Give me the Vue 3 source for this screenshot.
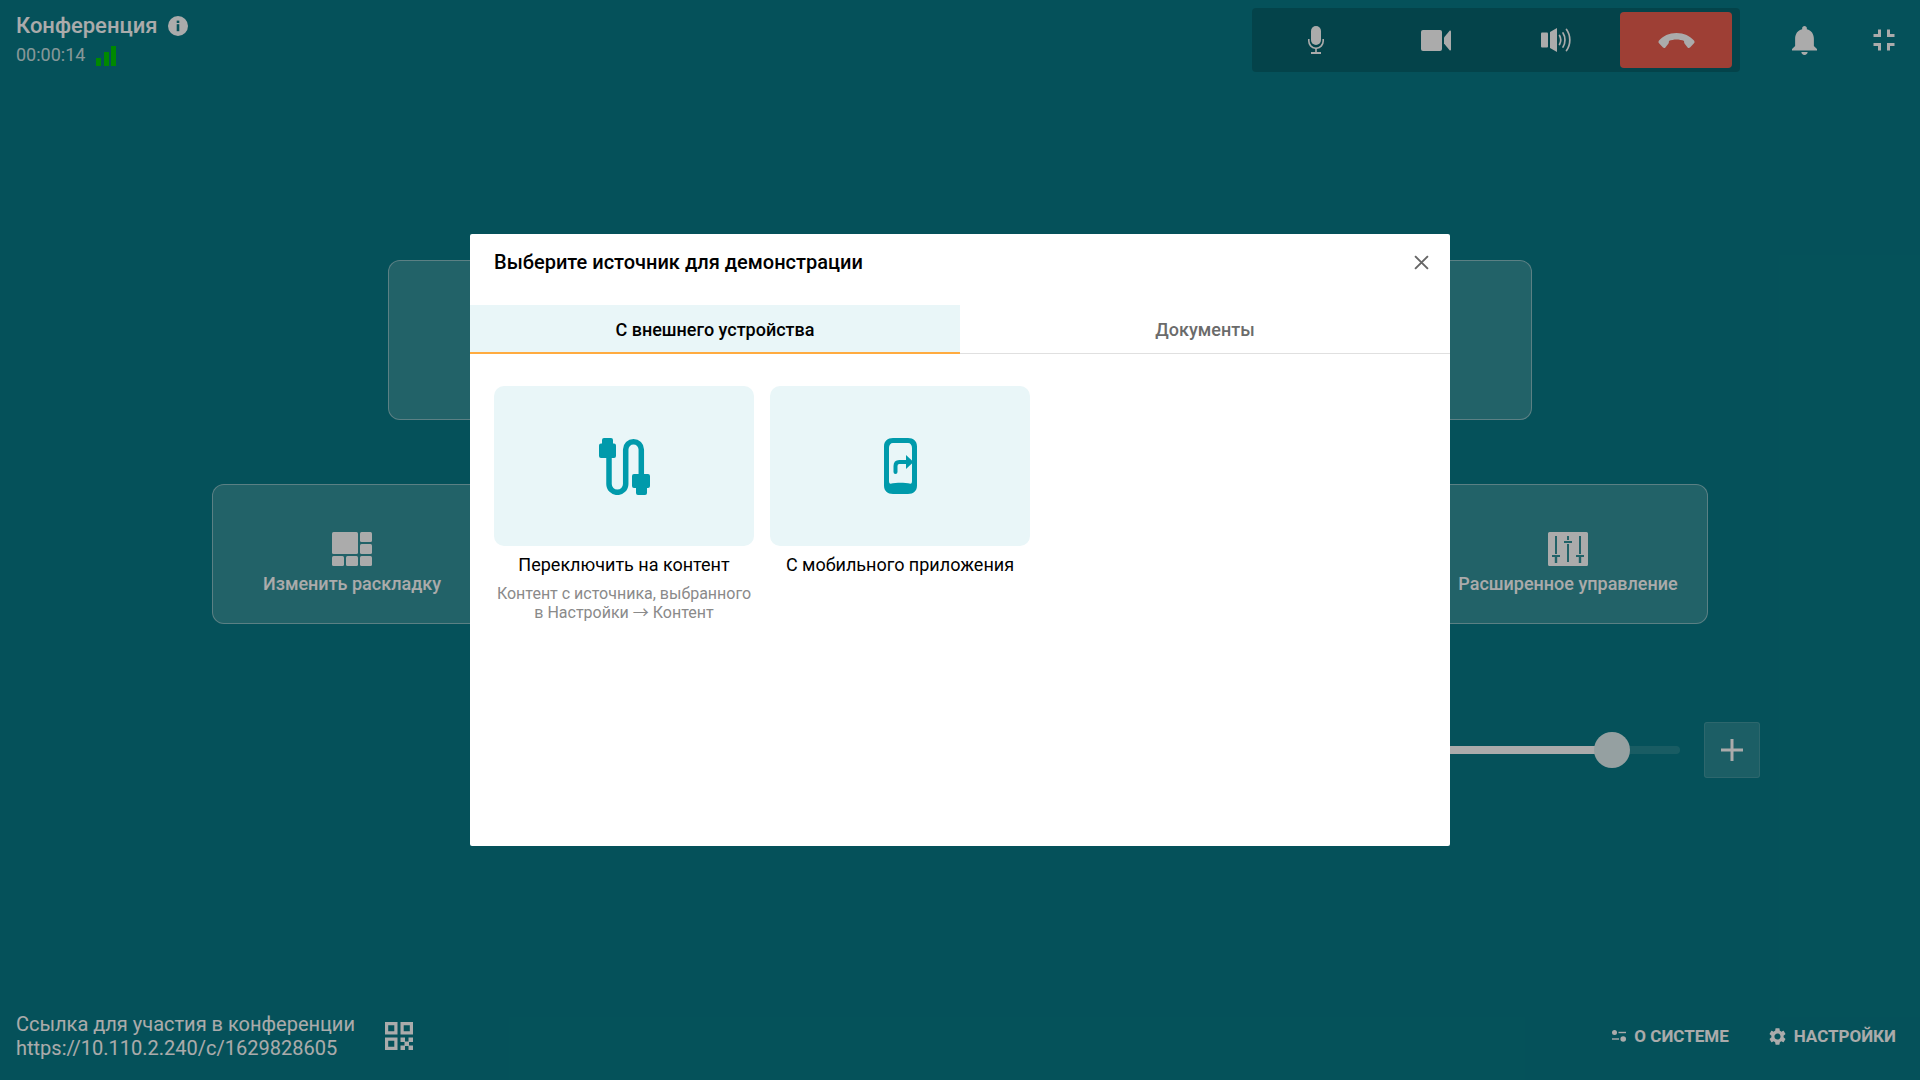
<script setup>
const topTiles = [0, 1, 2]
const midTiles = [0, 1, 2, 3, 4]
</script>

<template>
  <div class="page">
    <header class="topbar">
      <div class="conf">
        <div class="conf-title">
          <span>Конференция</span>
          <svg class="info" viewBox="0 0 20 20"><circle cx="10" cy="10" r="10" fill="#fff"/><rect x="8.7" y="8.2" width="2.6" height="7" fill="#087985"/><rect x="8.7" y="4.6" width="2.6" height="2.4" fill="#087985"/></svg>
        </div>
        <div class="conf-sub">
          <span>00:00:14</span>
          <div class="signal"><i class="b1"></i><i class="b2"></i><i class="b3"></i></div>
        </div>
      </div>
      <div class="controls">
        <div class="panel">
          <button class="pbtn">
            <svg width="16" height="28" viewBox="0 0 16 28" fill="#fff"><rect x="3" y="0" width="10" height="19" rx="5"/><path d="M0 13h1.600v2a6.400 6.400 0 0 0 12.800 0v-2H16v2a8 8 0 0 1-7.200 8v3H13v2H3v-2h4.200v-3A8 8 0 0 1 0 15z"/></svg>
          </button>
          <button class="pbtn">
            <svg width="30" height="21" viewBox="0 0 30 21" fill="#fff"><rect x="0" y="0" width="21" height="21" rx="2"/><path d="M23 7.500 28.600.8c.5-.5 1.400-.2 1.400.5v18.400c0 .7-.9 1-1.400.5L23 13.500z"/></svg>
          </button>
          <button class="pbtn">
            <svg width="30" height="24" viewBox="0 0 30 24" fill="none"><rect x="0" y="4.500" width="7" height="15" rx="1" fill="#fff"/><path d="M9 4 16 0v24l-7-4z" fill="#fff"/><path d="M18.500 7.500c1.400 2.500 1.400 6.500 0 9M22 5c2.600 4 2.600 10 0 14M25.500 1.500c4.400 6 4.400 15 0 21" stroke="#fff" stroke-width="1.700" stroke-linecap="round"/></svg>
          </button>
          <button class="pbtn hang">
            <svg width="37" height="15" viewBox="0 0 37 15" fill="#fff"><path d="M18.500 0C11 0 5 3 1 7.500c-.7 1-.7 2 0 2.800L5 14.500c.7.7 1.800.6 2.400-.1l3.100-3.900c.5-.7.500-1.500.4-2.500C13 7 16 6.500 18.500 6.500S24 7 26.100 8c-.1 1-.1 1.800.4 2.500l3.100 3.900c.6.700 1.700.8 2.400.1L36 10.300c.7-.8.7-1.800 0-2.800C32 3 26 0 18.500 0z"/></svg>
          </button>
        </div>
        <svg class="bell" viewBox="4 2.500 16 19.500" preserveAspectRatio="none" fill="#fff"><path d="M12 22c1.100 0 2-.9 2-2h-4c0 1.100.9 2 2 2zm6-6v-5c0-3.070-1.630-5.640-4.500-6.320V4c0-.83-.67-1.500-1.500-1.500s-1.500.67-1.500 1.500v.68C7.640 5.360 6 7.920 6 11v5l-2 2v1h16v-1l-2-2z"/></svg>
        <svg class="shrink" viewBox="0 0 24 24" fill="#fff"><path d="M5 16h3v3h2v-5H5v2zm3-8H5v2h5V5H8v3zm6 11h2v-3h3v-2h-5v5zm2-11V5h-2v5h5V8h-3z"/></svg>
      </div>
    </header>

    <main class="stage">
      <div class="row row-top">
        <div v-for="t in topTiles" :key="t" class="tile tile-top"></div>
      </div>
      <div class="row row-mid">
        <div v-for="t in midTiles" :key="t" class="tile tile-mid">
          <template v-if="t === 0">
            <svg width="40" height="34" viewBox="0 0 40 34" fill="#fff">
              <rect width="26" height="22" rx="1.500"/><rect x="28" width="12" height="10" rx="1.500"/><rect x="28" y="12" width="12" height="10" rx="1.500"/>
              <rect y="24" width="12" height="10" rx="1.500"/><rect x="14" y="24" width="12" height="10" rx="1.500"/><rect x="28" y="24" width="12" height="10" rx="1.500"/>
            </svg>
            <span>Изменить раскладку</span>
          </template>
          <template v-if="t === 4">
            <svg width="40" height="34" viewBox="0 0 40 34" fill="#fff">
              <path fill-rule="evenodd" d="M1.500 0h37A1.500 1.500 0 0 1 40 1.500v31a1.500 1.500 0 0 1-1.500 1.500h-37A1.500 1.500 0 0 1 0 32.500v-31A1.500 1.500 0 0 1 1.500 0zM7 4v18h2V4zM4 23v2h2.800v6h2.400v-6H12v-2zM19 4v4h2V4zM16 9v2h8V9zM19 12v18h2V12zM31 4v18h2V4zM28 23v2h2.800v6h2.400v-6H36v-2z"/>
            </svg>
            <span>Расширенное управление</span>
          </template>
        </div>
      </div>
      <div class="zoom">
        <div class="track"><div class="fill"></div><div class="thumb"></div></div>
        <div class="plus">
          <svg width="22" height="22" viewBox="0 0 22 22" fill="#fff"><rect x="9.500" y="0" width="3" height="22"/><rect x="0" y="9.500" width="22" height="3"/></svg>
        </div>
      </div>
    </main>

    <footer class="bottom">
      <div class="link">
        <div class="link-text">
          <div>Ссылка для участия в конференции</div>
          <div>https://10.110.2.240/c/1629828605</div>
        </div>
        <svg width="28" height="28" viewBox="0 0 28 28" fill="#fff">
          <path fill-rule="evenodd" d="M0 0h12.500v12.500H0zM3.200 3.200v6.100h6.100V3.200zM15.500 0H28v12.500H15.500zM18.700 3.200v6.100h6.100V3.200zM0 15.500h12.500V28H0zM3.200 18.700v6.100h6.100v-6.100z"/>
          <path d="M15.500 15.500h4.500V20h-4.500zM23.500 15.500H28V20h-4.500zM19.500 19.500h4.500V24h-4.500zM15.500 23.500h4.500V28h-4.500zM23.500 23.500H28V28h-4.500z"/>
        </svg>
      </div>
      <div class="actions">
        <div class="act">
          <svg width="14" height="12" viewBox="0 0 14 12" fill="#fff"><circle cx="2.500" cy="2.500" r="2.500"/><rect x="6.500" y="1.800" width="7.500" height="1.400"/><circle cx="11.200" cy="9" r="2.800"/><rect x="0" y="8.300" width="7" height="1.400"/></svg>
          <span>О СИСТЕМЕ</span>
        </div>
        <div class="act">
          <svg width="17" height="17" viewBox="2.400 2 19.200 20" fill="#fff"><path d="M19.140 12.940c.04-.3.060-.61.060-.94 0-.32-.02-.64-.07-.94l2.030-1.580c.18-.14.23-.41.120-.61l-1.920-3.320c-.12-.22-.37-.29-.59-.22l-2.390.96c-.5-.38-1.030-.7-1.620-.94l-.36-2.540c-.04-.24-.24-.41-.48-.41h-3.840c-.24 0-.43.17-.47.41l-.36 2.540c-.59.24-1.130.57-1.620.94l-2.390-.96c-.22-.08-.47 0-.59.22L2.740 8.870c-.12.210-.08.47.12.61l2.030 1.580c-.05.3-.09.63-.09.94s.02.640.07.94l-2.030 1.580c-.18.14-.23.41-.12.61l1.920 3.320c.12.220.37.290.59.220l2.390-.96c.5.380 1.030.7 1.620.94l.36 2.540c.05.240.24.410.48.410h3.840c.24 0 .44-.17.47-.41l.36-2.540c.59-.24 1.130-.56 1.620-.94l2.390.96c.22.080.47 0 .59-.22l1.920-3.320c.12-.22.070-.47-.12-.61l-2.010-1.580zM12 15.600c-1.980 0-3.600-1.620-3.600-3.600s1.620-3.600 3.600-3.600 3.600 1.620 3.600 3.600-1.620 3.600-3.600 3.600z"/></svg>
          <span>НАСТРОЙКИ</span>
        </div>
      </div>
    </footer>

    <div class="overlay">
      <section class="modal">
        <div class="modal-head">
          <h2>Выберите источник для демонстрации</h2>
          <svg class="close" viewBox="0 0 14 14" fill="none" stroke="#666" stroke-width="1.800"><path d="M1 1l12 12M13 1 1 13"/></svg>
        </div>
        <div class="tabs">
          <div class="tab active">С внешнего устройства</div>
          <div class="tab">Документы</div>
        </div>
        <div class="cards">
          <div class="card">
            <div class="card-box">
              <svg width="51" height="57" viewBox="0 0 51 57" fill="#009aab">
                <path d="M3 5.500V2a2 2 0 0 1 2-2h7a2 2 0 0 1 2 2v3.500h1a2 2 0 0 1 2 2V18a2 2 0 0 1-2 2H2a2 2 0 0 1-2-2V7.500a2 2 0 0 1 2-2z"/>
                <path d="M36 36h13a2 2 0 0 1 2 2v10a2 2 0 0 1-2 2h-1v5a2 2 0 0 1-2 2h-7a2 2 0 0 1-2-2v-5h-2a2 2 0 0 1-2-2V38a2 2 0 0 1 2-2z"/>
                <path d="M10 19v27a8.350 8.350 0 0 0 16.700 0V11.500a7.800 7.800 0 0 1 15.600 0V37" fill="none" stroke="#009aab" stroke-width="5.500"/>
              </svg>
            </div>
            <div class="card-title">Переключить на контент</div>
            <div class="card-desc">Контент с источника, выбранного<br>в Настройки → Контент</div>
          </div>
          <div class="card">
            <div class="card-box">
              <svg width="33" height="56" viewBox="0 0 33 56" fill="none">
                <path fill="#009aab" fill-rule="evenodd" d="M9 0h15c5.500 0 9 3 9 8.500v39c0 5.500-3.500 8.500-9 8.500H9c-5.500 0-9-3-9-8.500v-39C0 3 3.500 0 9 0zM5 10v33c0 1.500.5 2.800 1.500 2.800 3-.7 7-1 10-1s7 .3 10 1c1 0 1.500-1.300 1.500-2.800V10c0-3-1.500-5-4-5H9c-2.500 0-4 2-4 5z"/>
                <path d="M11.500 34v-6c0-2.400 1.400-4 3.800-4h8" stroke="#009aab" stroke-width="4" stroke-linecap="round"/>
                <path d="M22 17 29.500 24 22 31z" fill="#009aab"/>
              </svg>
            </div>
            <div class="card-title">С мобильного приложения</div>
          </div>
        </div>
      </section>
    </div>
  </div>
</template>

<style>
html, body { margin: 0; padding: 0; }
</style>

<style scoped>
* { box-sizing: border-box; }
.page {
  position: relative;
  width: 1920px;
  height: 1080px;
  overflow: hidden;
  display: flex;
  flex-direction: column;
  background: #087a86;
  color: #fff;
  font-family: Roboto, "Liberation Sans", sans-serif;
}
.topbar {
  height: 84px;
  flex: none;
  display: flex;
  justify-content: space-between;
  padding: 8px 18px 0 16px;
}
.conf-title {
  display: flex;
  align-items: center;
  gap: 11px;
  font-size: 22px;
  font-weight: 500;
  line-height: 36px;
  height: 36px;
}
.info { width: 20px; height: 20px; }
.conf-sub {
  display: flex;
  align-items: flex-end;
  gap: 11px;
  font-size: 18px;
  color: rgba(255, 255, 255, 0.8);
  line-height: 22px;
}
.signal { display: flex; align-items: flex-end; gap: 2.500px; height: 20px; }
.signal i { display: block; width: 5px; background: #00cc00; }
.b1 { height: 8px; }
.b2 { height: 14px; }
.b3 { height: 20px; }
.controls { display: flex; align-items: flex-start; }
.panel {
  display: flex;
  height: 64px;
  padding: 4px;
  background: rgba(0, 0, 0, 0.17);
  border-radius: 4px;
}
.pbtn {
  width: 120px;
  height: 56px;
  border: 0;
  padding: 0;
  background: none;
  display: flex;
  align-items: center;
  justify-content: center;
}
.hang {
  width: 112px;
  margin: 0 4px;
  background: #ec5f50;
  border-radius: 4px;
}
.bell { width: 25px; height: 29px; margin: 18px 0 0 52px; }
.shrink { width: 36px; height: 36px; margin: 14px 0 0 49px; }
.stage {
  flex: 1;
  display: flex;
  flex-direction: column;
  align-items: center;
  padding-top: 176px;
}
.row { display: flex; gap: 24px; }
.row-top { width: 1144px; height: 160px; }
.row-mid { width: 1496px; height: 140px; margin-top: 64px; }
.tile {
  flex: 1;
  background: rgba(255, 255, 255, 0.18);
  border: 1px solid rgba(255, 255, 255, 0.42);
  border-radius: 12px;
  display: flex;
  flex-direction: column;
  align-items: center;
  font-size: 18px;
  font-weight: 500;
}
.tile-mid { padding-top: 47px; gap: 6px; line-height: 24px; }
.tile-mid span { white-space: nowrap; }
.zoom {
  align-self: flex-end;
  margin: 98px 160px 0 0;
  display: flex;
  align-items: center;
  gap: 24px;
  height: 56px;
}
.track {
  position: relative;
  width: 1000px;
  height: 8px;
  border-radius: 4px;
  background: rgba(255, 255, 255, 0.12);
}
.fill {
  width: 932px;
  height: 8px;
  border-radius: 4px 0 0 4px;
  background: #fff;
}
.thumb {
  position: absolute;
  left: 914px;
  top: -14px;
  width: 36px;
  height: 36px;
  border-radius: 50%;
  background: #dfeff0;
}
.plus {
  width: 56px;
  height: 56px;
  display: flex;
  align-items: center;
  justify-content: center;
  background: rgba(255, 255, 255, 0.14);
  border: 1px solid rgba(255, 255, 255, 0.12);
  border-radius: 3px;
}
.bottom {
  height: 88px;
  flex: none;
  display: flex;
  justify-content: space-between;
  align-items: center;
  padding: 0 24px 0 16px;
}
.link { display: flex; align-items: center; gap: 30px; }
.link-text { font-size: 20px; line-height: 24px; }
.actions { display: flex; gap: 40px; }
.act {
  display: flex;
  align-items: center;
  gap: 8px;
  font-size: 17px;
  font-weight: 700;
}
.overlay {
  position: absolute;
  inset: 0;
  display: flex;
  align-items: center;
  justify-content: center;
  background: rgba(0, 0, 0, 0.33);
}
.modal {
  width: 980px;
  height: 612px;
  background: #fff;
  border-radius: 2px;
  color: #000;
}
.modal-head {
  height: 71px;
  display: flex;
  justify-content: space-between;
  align-items: center;
  padding: 0 21px 15px 24px;
}
.modal-head h2 { margin: 0; font-size: 20px; font-weight: 500; }
.close { width: 15px; height: 15px; }
.tabs { display: flex; height: 49px; border-bottom: 1px solid #e0e0e0; }
.tab {
  flex: 1;
  display: flex;
  align-items: center;
  justify-content: center;
  font-size: 18px;
  font-weight: 500;
  color: #6b6b6b;
  margin-bottom: -1px;
}
.tab.active {
  background: #e9f6f8;
  color: #000;
  border-bottom: 2px solid #ffab40;
  padding-top: 2px;
}
.cards { display: flex; gap: 16px; padding: 32px 24px 0; }
.card { width: 260px; text-align: center; }
.card-box {
  height: 160px;
  background: #e9f6f8;
  border-radius: 10px;
  display: flex;
  align-items: center;
  justify-content: center;
}
.card-title { font-size: 18px; line-height: 24px; margin-top: 7px; }
.card-desc {
  font-family: Roboto, "Noto Sans CJK SC", sans-serif;
  font-size: 16px;
  line-height: 19px;
  color: #8a8a8a;
  margin-top: 7px;
  white-space: nowrap;
}
</style>
